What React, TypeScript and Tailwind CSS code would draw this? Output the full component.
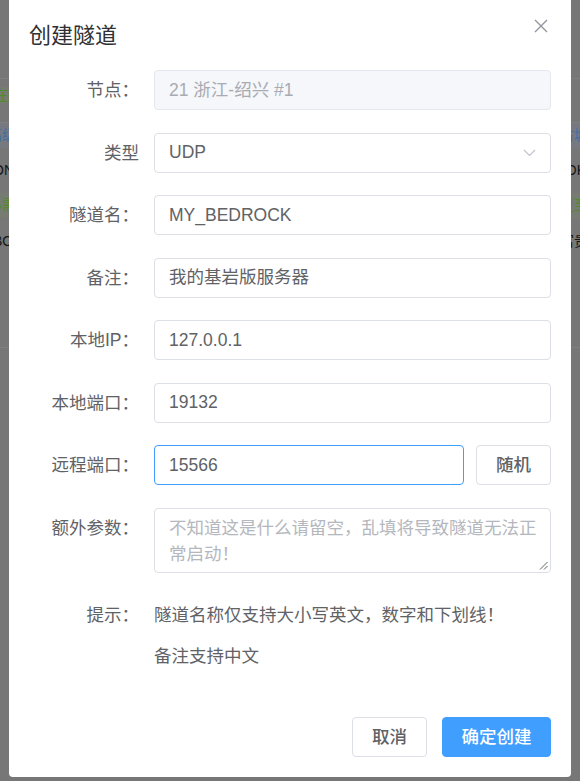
import { ReactNode } from "react"

const font = "font-['Liberation_Sans','Noto_Sans_CJK_SC',sans-serif]"

function Row({ label, children, className = "mb-[22.5px]" }: { label: string; children: ReactNode; className?: string }) {
  return (
    <div className={`flex ${className}`}>
      <div className="w-[125px] shrink-0 pr-[15px] text-right text-[17.5px] leading-10 text-[#606266]">{label}</div>
      <div className="min-w-0 flex-1">{children}</div>
    </div>
  )
}

function Field({ value, tone = "normal" }: { value: string; tone?: "normal" | "disabled" | "focus" }) {
  const look =
    tone === "disabled"
      ? "border-[#e4e7ed] bg-[#f5f7fa] text-[#a8abb2]"
      : tone === "focus"
        ? "border-[#409eff] bg-white text-[#606266]"
        : "border-[#dcdfe6] bg-white text-[#606266]"
  return (
    <div className={`flex h-10 w-full items-center rounded-[4px] border px-[14px] text-[17.5px] ${look}`}>
      {value}
    </div>
  )
}

function Backdrop() {
  return (
    <div className="flex flex-col text-[14px]">
      <div className="h-[78px]" />
      <div className="h-px bg-[#7f7f7f]" />
      <div className="h-[8px]" />
      <div className="flex h-[16px] justify-between">
        <span className="-ml-[10px] bg-[#767c72] px-1 leading-[16px] text-[#4f8a2c]">在线</span>
      </div>
      <div className="h-[19px]" />
      <div className="h-px bg-[#7f7f7f]" />
      <div className="flex h-[25px] items-center justify-between bg-[#767a80]">
        <span className="-ml-[12px] text-[#3f6ea3]">高级</span>
        <span className="mr-[-8px] text-[#3f6ea3]">古城</span>
      </div>
      <div className="h-[15px]" />
      <div className="flex h-[15px] items-center justify-between text-[#151515]">
        <span className="-ml-[7px]">ON</span>
        <span className="mr-[-6px]">OK</span>
      </div>
      <div className="h-[15px]" />
      <div className="flex h-[25px] items-center justify-between bg-[#767c72]">
        <span className="-ml-[12px] text-[#4f8a2c]">必需</span>
        <span className="mr-[-8px] text-[#4f8a2c]">夏至</span>
      </div>
      <div className="h-[15px]" />
      <div className="flex h-[17px] items-center justify-between text-[#151515]">
        <span className="-ml-[7px]">BO</span>
        <span className="mr-[-8px]">富贵</span>
      </div>
      <div className="h-[97px]" />
      <div className="h-px bg-[#7f7f7f]" />
    </div>
  )
}

export default function App() {
  return (
    <div className={`relative h-[781px] w-[580px] overflow-hidden bg-[#777777] ${font}`}>
      <Backdrop />

      {/* dialog */}
      <div className="absolute left-[9px] top-0 w-[562px] rounded-b-[4px] bg-white">
        <div className="px-[20px] pb-[20px] pt-[22px]">
          <div className="text-[22px] leading-[28px] text-[#303133]">创建隧道</div>
        </div>
        <button className="absolute right-[23px] top-[19px] p-0">
          <svg width="14" height="14" viewBox="0 0 14 14" fill="none" stroke="#909399" strokeWidth="1.3">
            <path d="M1 1 L13 13 M13 1 L1 13" />
          </svg>
        </button>

        <div className="px-[20px]">
          <Row label="节点：">
            <Field value="21 浙江-绍兴 #1" tone="disabled" />
          </Row>
          <Row label="类型">
            <div className="flex h-10 w-full items-center justify-between rounded-[4px] border border-[#dcdfe6] px-[14px] text-[17.5px] text-[#606266]">
              <span>UDP</span>
              <svg width="13" height="8" viewBox="0 0 13 8" fill="none" stroke="#c0c4cc" strokeWidth="1.2">
                <path d="M1 1 L6.5 6.5 L12 1" />
              </svg>
            </div>
          </Row>
          <Row label="隧道名：">
            <Field value="MY_BEDROCK" />
          </Row>
          <Row label="备注：">
            <Field value="我的基岩版服务器" />
          </Row>
          <Row label="本地IP：">
            <Field value="127.0.0.1" />
          </Row>
          <Row label="本地端口：">
            <Field value="19132" />
          </Row>
          <Row label="远程端口：">
            <div className="flex gap-[12px]">
              <Field value="15566" tone="focus" />
              <button className="h-10 w-[75px] shrink-0 rounded-[4px] border border-[#dcdfe6] bg-white text-[17.5px] font-medium text-[#606266]">
                随机
              </button>
            </div>
          </Row>
          <Row label="额外参数：">
            <div className="relative h-[65px] w-full rounded-[4px] border border-[#dcdfe6] pl-[14px] pr-[10px] pt-[6px] text-[17.5px] leading-[26px] text-[#b4b7bd]">
              不知道这是什么请留空，乱填将导致隧道无法正常启动！
              <svg className="absolute bottom-[2px] right-[2px]" width="9" height="9" viewBox="0 0 9 9" fill="none" stroke="#606266" strokeWidth="1">
                <path d="M8.5 1 L1 8.5 M8.5 5 L5 8.5" />
              </svg>
            </div>
          </Row>
          <Row label="提示：" className="">
            <div className="text-[17.5px] text-[#606266]">
              <div className="h-[41px] leading-[41px]">隧道名称仅支持大小写英文，数字和下划线！</div>
              <div className="h-10 leading-10">备注支持中文</div>
            </div>
          </Row>
        </div>

        <div className="flex justify-end gap-[15px] px-[20px] pb-[20px] pt-[41px]">
          <button className="h-10 w-[75px] rounded-[4px] border border-[#dcdfe6] bg-white text-[17.5px] font-medium text-[#606266]">
            取消
          </button>
          <button className="h-10 w-[109px] rounded-[4px] border border-[#409eff] bg-[#409eff] text-[17.5px] font-medium text-white">
            确定创建
          </button>
        </div>
      </div>
    </div>
  )
}
